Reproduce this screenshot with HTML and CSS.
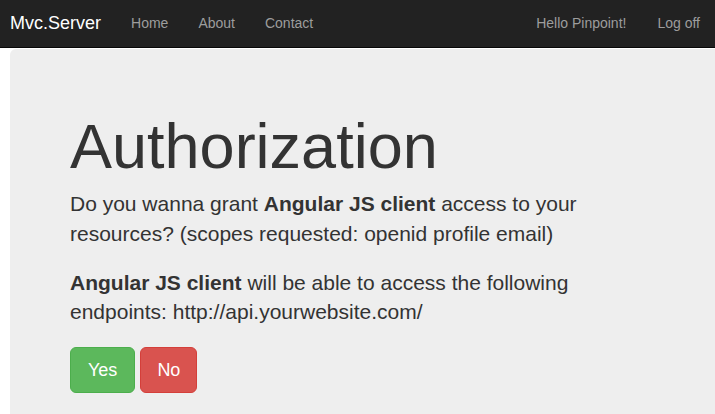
FILE: index.html
```html
<!DOCTYPE html>
<html lang="en">
<head>
<meta charset="utf-8">
<title>Authorization</title>
<link rel="stylesheet" href="styles.css">
</head>
<body>
<nav class="navbar">
  <div class="nav-left">
    <a class="brand" href="#">Mvc.Server</a>
    <a class="nav-link" href="#">Home</a>
    <a class="nav-link" href="#">About</a>
    <a class="nav-link" href="#">Contact</a>
  </div>
  <div class="nav-right">
    <a class="nav-link" href="#">Hello Pinpoint!</a>
    <a class="nav-link" href="#">Log off</a>
  </div>
</nav>
<div class="page">
  <div class="jumbotron">
    <h1 class="title">Authorization</h1>
    <p class="lead">Do you wanna grant <strong>Angular JS client</strong> access to your resources? (scopes requested: openid profile email)</p>
    <p class="lead"><strong>Angular JS client</strong> will be able to access the following endpoints: http://api.yourwebsite.com/</p>
    <div class="actions">
      <button class="btn btn-yes" type="button">Yes</button>
      <button class="btn btn-no" type="button">No</button>
    </div>
  </div>
</div>
</body>
</html>
```
FILE: styles.css
```css
html, body {
  margin: 0;
  padding: 0;
  background: #fff;
  overflow: hidden;
}
body {
  font-family: "Liberation Sans", Arial, sans-serif;
  color: #333;
}
.navbar {
  display: flex;
  justify-content: space-between;
  height: 47px;
  background: #222;
  border-bottom: 1px solid #080808;
}
.nav-left, .nav-right {
  display: flex;
}
.navbar a {
  text-decoration: none;
  line-height: 47px;
}
.brand {
  font-size: 18px;
  color: #fff;
  padding: 0 15px 0 10px;
}
.nav-link {
  font-size: 14px;
  color: #9d9d9d;
  padding: 0 15px;
}
.nav-right .nav-link:first-child {
  padding-left: 13px;
  padding-right: 16px;
}
.page {
  padding: 1px 0 0 10px;
  overflow: hidden;
}
.jumbotron {
  background: #eee;
  border-radius: 6px;
  margin-right: -30px;
  padding: 48px 60px 30px;
  min-height: 300px;
}
.title {
  font-size: 63px;
  font-weight: 400;
  line-height: 1.1;
  margin: 15px 0 8px;
}
.lead {
  font-size: 21px;
  line-height: 1.4;
  margin: 0 0 20px;
  max-width: 540px;
}
.lead strong {
  font-weight: 700;
}
.actions {
  display: flex;
  gap: 5px;
}
.btn {
  font-family: "Liberation Sans", Arial, sans-serif;
  font-size: 18px;
  line-height: 24px;
  padding: 10px 17px;
  border-radius: 6px;
  border: 1px solid transparent;
  color: #fff;
  cursor: pointer;
}
.btn-yes {
  background: #5cb85c;
  border-color: #4cae4c;
}
.btn-no {
  padding: 10px 16px;
  background: #d9534f;
  border-color: #d43f3a;
}
```
